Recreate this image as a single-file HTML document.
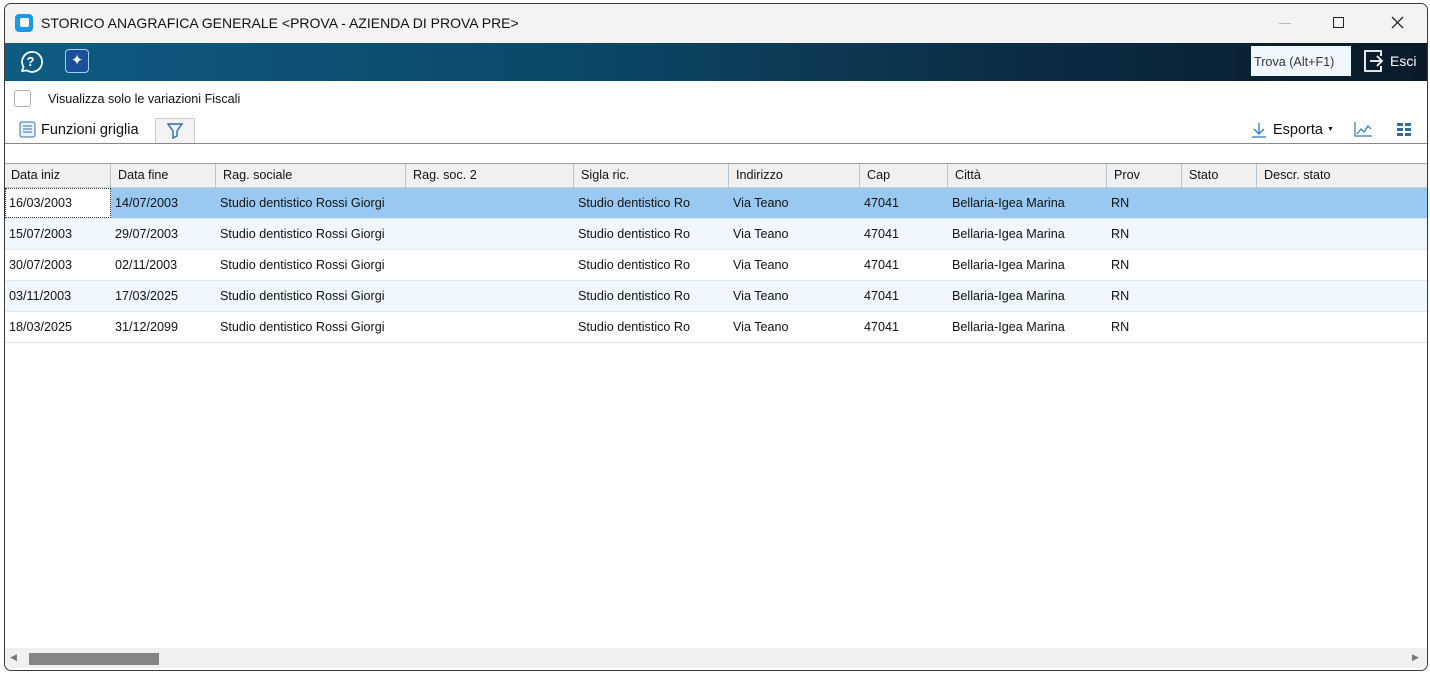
<!DOCTYPE html>
<html><head><style>
*{margin:0;padding:0;box-sizing:border-box}
body{width:1430px;height:673px;background:#fff;font-family:"Liberation Sans",sans-serif;position:relative;overflow:hidden}
.win{position:absolute;left:4px;top:3px;width:1424px;height:668px;border:1px solid #3a3a3a;border-radius:7px;overflow:hidden;background:#fff}
.title{position:absolute;left:0;top:0;width:100%;height:39px;background:#f3f3f3}
.title span{position:absolute;left:36px;top:11px;font-size:14px;color:#111}
.tb{position:absolute;left:0;top:39px;width:100%;height:38px;background:linear-gradient(90deg,#0e5c82 0%,#0c4868 40%,#0b2a40 75%,#0a1a28 100%)}
.abs{position:absolute}
.t{position:absolute;font-size:12.6px;color:#111;white-space:nowrap}
.hdr{position:absolute;left:0;top:159px;width:1422px;height:25px;background:#f0f0f0;border-top:1px solid #a0a0a0;border-bottom:1px solid #c8d0da}
.row{position:absolute;left:0;width:1422px;height:31px;border-bottom:1px solid #dfe6ee}
.vl{position:absolute;top:0;width:1px;height:24px;background:#b8c4d0}
</style></head><body>
<div class="win">
 <div class="title">
  <div class="abs" style="left:10px;top:10px;width:18px;height:18px;background:#1a9be0;border-radius:4px"><div class="abs" style="left:5px;top:4px;width:9px;height:9px;background:#fff;border-radius:2px"></div></div>
  <span>STORICO ANAGRAFICA GENERALE &lt;PROVA - AZIENDA DI PROVA PRE&gt;</span>
  <div class="abs" style="left:1274px;top:19px;width:12px;height:1px;background:#bbb"></div>
  <div class="abs" style="left:1328px;top:13px;width:11px;height:11px;border:1.3px solid #222"></div>
  <svg class="abs" style="left:1386px;top:12px" width="13" height="13"><path d="M1 1L12 12M12 1L1 12" stroke="#222" stroke-width="1.3"/></svg>
 </div>
 <div class="tb">
  <svg class="abs" style="left:13px;top:6px" width="26" height="26"><path d="M4 22L5.5 18A10 10 0 1 1 9 21.5Z" fill="none" stroke="#fff" stroke-width="1.8" stroke-linejoin="round"/><text x="8.5" y="17" fill="#fff" font-size="13" font-weight="bold" font-family="Liberation Sans">?</text></svg>
  <div class="abs" style="left:60px;top:6px;width:24px;height:24px;background:#1b4f9a;border:1.5px solid #9fd0ff;border-radius:4px;color:#fff;font-size:15px;text-align:center;line-height:21px">✦</div>
  <div class="abs" style="left:1246px;top:3px;width:100px;height:30px;background:#f0f7fc"><span class="t" style="left:3px;top:9px;color:#333">Trova (Alt+F1)</span></div>
  <svg class="abs" style="left:1357px;top:6px" width="24" height="24"><path d="M8 2H3v20h5M3 2h16v5M19 17v5H3" fill="none" stroke="#fff" stroke-width="1.8"/><path d="M8 12h12M15 7l5 5-5 5" fill="none" stroke="#fff" stroke-width="1.8"/></svg>
  <span class="t" style="left:1385px;top:10px;color:#fff;font-size:14px">Esci</span>
 </div>
 <div class="abs" style="left:9px;top:86px;width:17px;height:17px;border:1px solid #aaa;border-radius:3px"></div>
 <span class="t" style="left:43px;top:88px">Visualizza solo le variazioni Fiscali</span>
 <svg class="abs" style="left:14px;top:117px" width="17" height="17"><rect x="1" y="1" width="15" height="15" rx="2" fill="#eaf2fb" stroke="#3b6fae"/><path d="M4 5h9M4 8h9M4 11h9" stroke="#3b6fae"/></svg>
 <span class="t" style="left:36px;top:118px;font-size:14.5px">Funzioni griglia</span>
 <div class="abs" style="left:150px;top:114px;width:40px;height:25px;background:#f3f3f3;border:1px solid #ccc;border-bottom:none"></div>
 <svg class="abs" style="left:161px;top:118px" width="18" height="18"><path d="M2 2h14l-5 7v5l-4 2V9z" fill="none" stroke="#2a6bb8" stroke-width="1.4"/></svg>
 <div class="abs" style="left:0;top:139px;width:1422px;height:1px;background:#888"></div>
 <svg class="abs" style="left:1245px;top:117px" width="18" height="18"><path d="M9 2v11M4 8l5 5 5-5M2 16h14" fill="none" stroke="#2a7bc8" stroke-width="1.3"/></svg>
 <span class="t" style="left:1268px;top:118px;font-size:14.5px">Esporta</span>
 <span class="t" style="left:1322px;top:122px;font-size:7px">▼</span>
 <svg class="abs" style="left:1348px;top:116px" width="20" height="18"><path d="M2 2v14h17M4 14l4-5 3 3 4-6 3 3" fill="none" stroke="#2a7bc8" stroke-width="1.2"/></svg>
 <svg class="abs" style="left:1391px;top:118px" width="16" height="16" fill="#2e6aa8"><rect x="1" y="1" width="6" height="3"/><rect x="9" y="1" width="6" height="3"/><rect x="1" y="6" width="6" height="3"/><rect x="9" y="6" width="6" height="3"/><rect x="1" y="11" width="6" height="3"/><rect x="9" y="11" width="6" height="3"/></svg>
 <div class="hdr">
  <div class="vl" style="left:105px"></div><div class="vl" style="left:210px"></div><div class="vl" style="left:400px"></div><div class="vl" style="left:568px"></div><div class="vl" style="left:723px"></div><div class="vl" style="left:854px"></div><div class="vl" style="left:942px"></div><div class="vl" style="left:1101px"></div><div class="vl" style="left:1176px"></div><div class="vl" style="left:1251px"></div>
  <span class="t" style="left:6px;top:4px">Data iniz</span><span class="t" style="left:113px;top:4px">Data fine</span><span class="t" style="left:218px;top:4px">Rag. sociale</span><span class="t" style="left:408px;top:4px">Rag. soc. 2</span><span class="t" style="left:576px;top:4px">Sigla ric.</span><span class="t" style="left:731px;top:4px">Indirizzo</span><span class="t" style="left:862px;top:4px">Cap</span><span class="t" style="left:950px;top:4px">Città</span><span class="t" style="left:1109px;top:4px">Prov</span><span class="t" style="left:1184px;top:4px">Stato</span><span class="t" style="left:1259px;top:4px">Descr. stato</span>
 </div>
 <div class="row" style="top:184px;background:#99c9f0"><div class="abs" style="left:0;top:0;width:106px;height:30px;background:#fff;border:1px dotted #333"></div></div>
 <div class="row" style="top:215px;background:#f0f7fd"></div>
 <div class="row" style="top:246px"></div>
 <div class="row" style="top:277px;background:#f0f7fd"></div>
 <div class="row" style="top:308px"></div>
 <div id="rows"></div>
 <div class="abs" style="left:0;top:644px;width:1422px;height:20px;background:#f0f0f0"></div>
 <div class="abs" style="left:24px;top:649px;width:130px;height:12px;background:#858585"></div>
 <span class="t" style="left:5px;top:648px;font-size:9px;color:#777">◀</span>
 <span class="t" style="left:1407px;top:648px;font-size:9px;color:#777">▶</span>
</div>
<script>
var d=[["16/03/2003","14/07/2003"],["15/07/2003","29/07/2003"],["30/07/2003","02/11/2003"],["03/11/2003","17/03/2025"],["18/03/2025","31/12/2099"]];
var h="";
d.forEach(function(r,i){var y=192+i*31;var c=[[4,r[0]],[110,r[1]],[215,"Studio dentistico Rossi Giorgi"],[573,"Studio dentistico Ro"],[728,"Via Teano"],[859,"47041"],[947,"Bellaria-Igea Marina"],[1106,"RN"]];
c.forEach(function(x){h+='<span class="t" style="left:'+x[0]+'px;top:'+y+'px">'+x[1]+'</span>'});});
document.getElementById("rows").innerHTML=h;
</script>
</body></html>
